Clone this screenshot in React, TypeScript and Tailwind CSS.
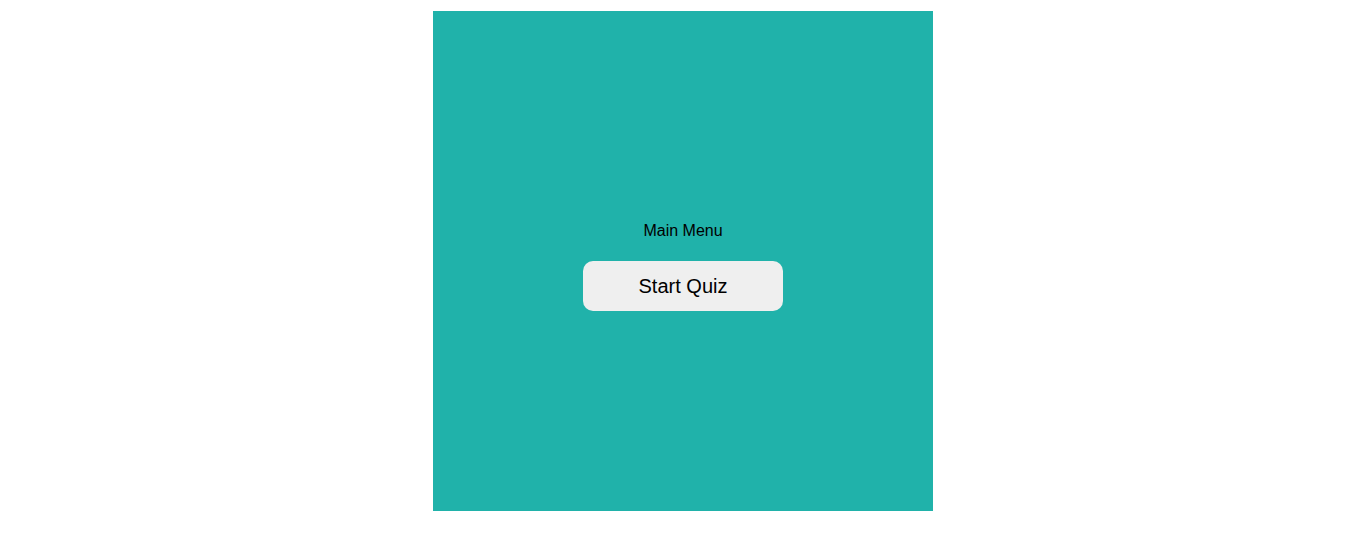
const App = () => {
  return (
    <div className="w-full min-h-[537px] bg-white pt-[11px] font-['Liberation_Sans',Arial,sans-serif]">
      <div className="mx-auto w-[500px] h-[500px] bg-[#20b2aa] flex flex-col items-center justify-center pt-[11px]">
        <p className="text-[16px] leading-[18px] text-black">Main Menu</p>
        <button className="mt-[21px] w-[200px] h-[50px] rounded-[10px] bg-[#efefef] text-[20px] text-black">
          Start Quiz
        </button>
      </div>
    </div>
  );
};

export default App;
